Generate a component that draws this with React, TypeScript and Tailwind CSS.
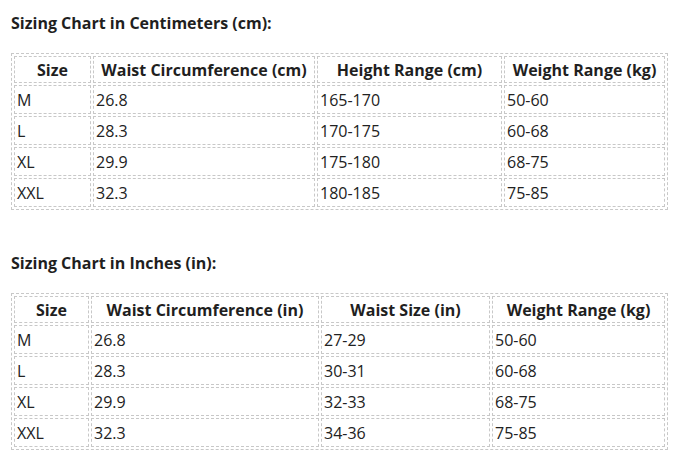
import React from "react";

type Table = {
  title: string;
  headers: string[];
  widths: string[];
  rows: string[][];
};

const tables: Table[] = [
  {
    title: "Sizing Chart in Centimeters (cm):",
    headers: ["Size", "Waist Circumference (cm)", "Height Range (cm)", "Weight Range (kg)"],
    widths: ["w-[77px]", "w-[222px]", "w-[185px]", "w-[161px]"],
    rows: [
      ["M", "26.8", "165-170", "50-60"],
      ["L", "28.3", "170-175", "60-68"],
      ["XL", "29.9", "175-180", "68-75"],
      ["XXL", "32.3", "180-185", "75-85"],
    ],
  },
  {
    title: "Sizing Chart in Inches (in):",
    headers: ["Size", "Waist Circumference (in)", "Waist Size (in)", "Weight Range (kg)"],
    widths: ["w-[75px]", "w-[228px]", "w-[169px]", "w-[173px]"],
    rows: [
      ["M", "26.8", "27-29", "50-60"],
      ["L", "28.3", "30-31", "60-68"],
      ["XL", "29.9", "32-33", "68-75"],
      ["XXL", "32.3", "34-36", "75-85"],
    ],
  },
];

function Chart({ t, first }: { t: Table; first: boolean }) {
  return (
    <div className={first ? "" : "mt-[42px]"}>
      <h2 className="text-[16px] font-bold leading-[22px] text-[#1f1f1f]">{t.title}</h2>
      <table className="mt-[19px] table-fixed border-separate border-spacing-[2px] border border-dashed border-[#c8c8c8] w-[657px]">
        <thead>
          <tr>
            {t.headers.map((h, i) => (
              <th
                key={h}
                className={`${t.widths[i]} h-[27px] p-0 border border-dashed border-[#c8c8c8] text-center text-[16px] font-bold text-[#1f1f1f] leading-[20px]`}
              >
                {h}
              </th>
            ))}
          </tr>
        </thead>
        <tbody>
          {t.rows.map((r) => (
            <tr key={r[0]}>
              {r.map((c, i) => (
                <td
                  key={i}
                  className="h-[29px] py-0 pl-[2px] pr-0 border border-dashed border-[#c8c8c8] text-left text-[16px] text-[#222] leading-[20px]"
                >
                  {c}
                </td>
              ))}
            </tr>
          ))}
        </tbody>
      </table>
    </div>
  );
}

export default function App() {
  return (
    <div
      className="w-[681px] h-[472px] bg-white px-[11px] pt-[12px]"
      style={{ fontFamily: '"Open Sans", "Noto Sans", sans-serif' }}
    >
      {tables.map((t, i) => (
        <Chart key={t.title} t={t} first={i === 0} />
      ))}
    </div>
  );
}
